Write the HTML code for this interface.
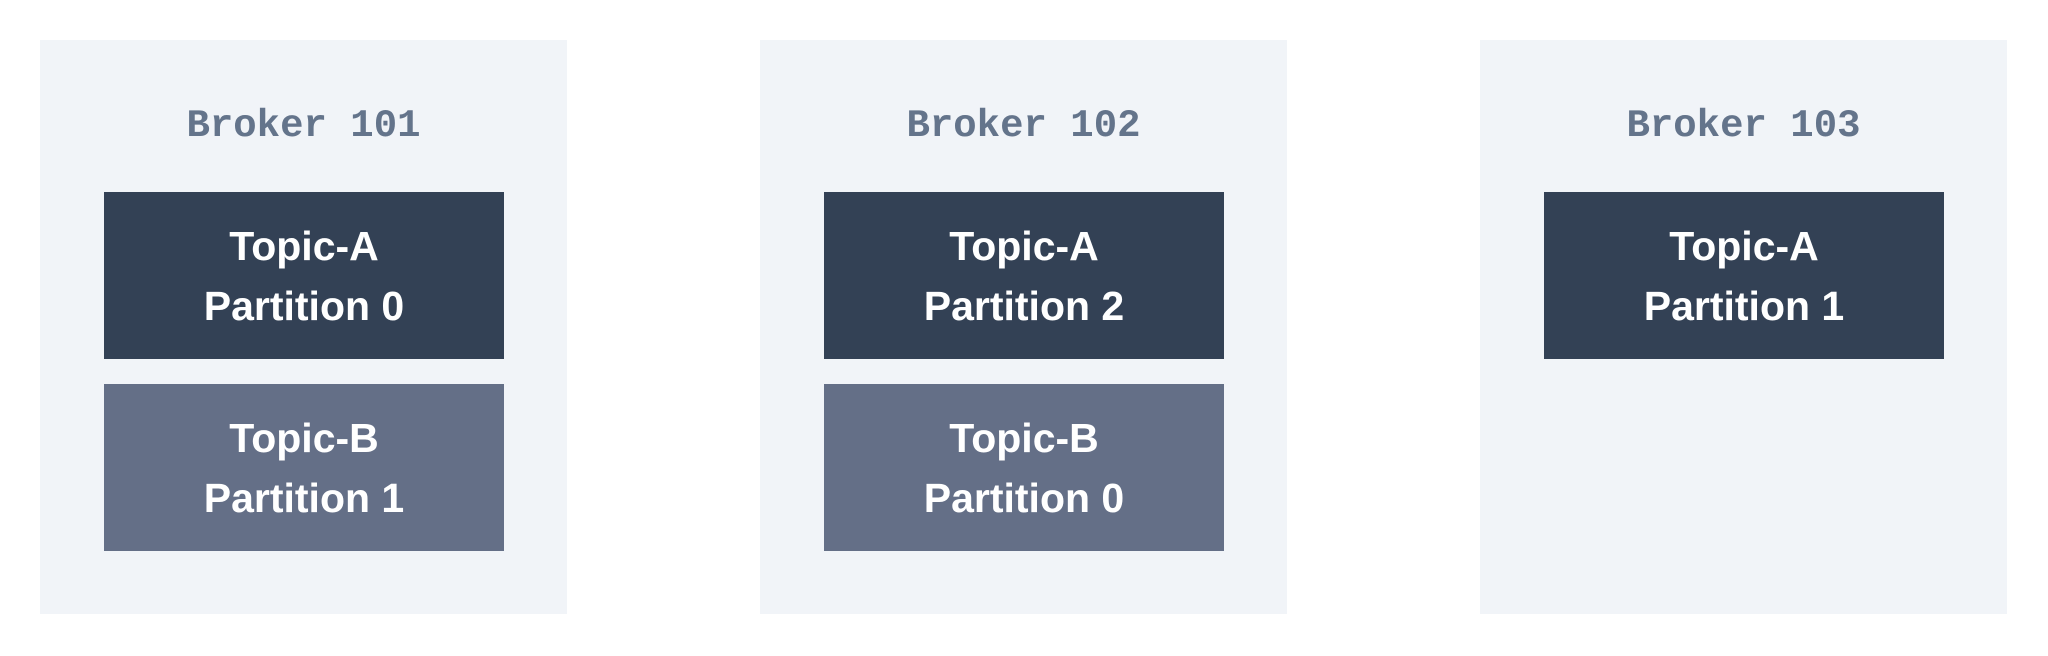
<!DOCTYPE html>
<html><head><style>
body{margin:0;width:2048px;height:656px;background:#fff;position:relative;overflow:hidden}
.b{position:absolute;top:40px;width:527px;height:574px;background:#f1f4f8}
.t{position:absolute;top:60px;left:0;width:100%;text-align:center;font:bold 39px "Liberation Mono",monospace;color:#64748b;line-height:52px}
.p{position:absolute;left:64px;width:400px;height:167px;display:flex;flex-direction:column;justify-content:center;align-items:center;color:#fff;font:bold 41px "Liberation Sans",sans-serif;line-height:60px}
.a{top:152px;background:#334155}
.c{top:344px;background:#646f87}
</style></head><body>
<div class="b" style="left:40px"><div class="t">Broker 101</div>
<div class="p a"><div>Topic-A</div><div>Partition 0</div></div>
<div class="p c"><div>Topic-B</div><div>Partition 1</div></div></div>
<div class="b" style="left:760px"><div class="t">Broker 102</div>
<div class="p a"><div>Topic-A</div><div>Partition 2</div></div>
<div class="p c"><div>Topic-B</div><div>Partition 0</div></div></div>
<div class="b" style="left:1480px"><div class="t">Broker 103</div>
<div class="p a"><div>Topic-A</div><div>Partition 1</div></div></div>
</body></html>
